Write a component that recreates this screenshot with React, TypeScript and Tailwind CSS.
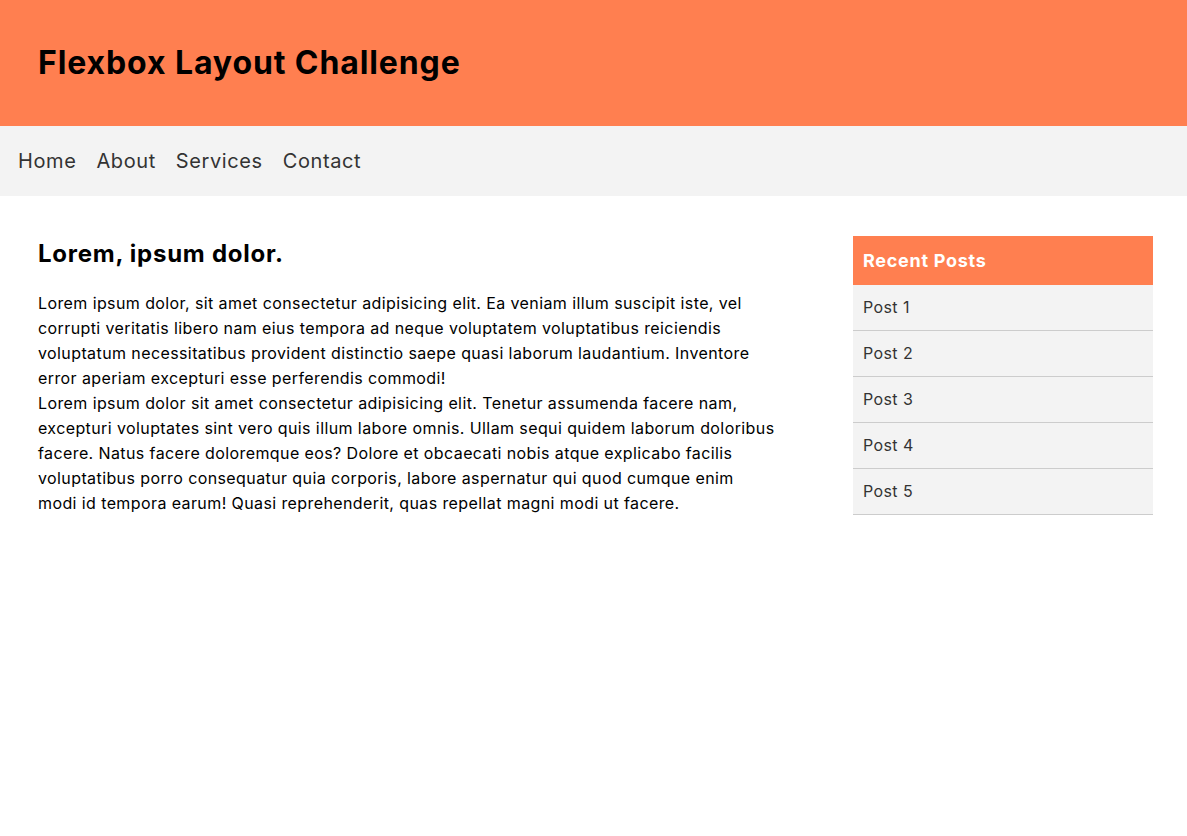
import React from "react";

const posts = ["Post 1", "Post 2", "Post 3", "Post 4", "Post 5"];

export default function App() {
  return (
    <div className="min-h-screen bg-white font-['Inter',sans-serif] tracking-wide text-black">
      <header className="flex h-[126px] items-center bg-[#ff7f50] pl-[38px]">
        <h1 className="text-[32px] font-bold leading-none tracking-[0.028em]">Flexbox Layout Challenge</h1>
      </header>
      <nav className="flex h-[70px] items-center gap-5 bg-[#f3f3f3] pl-[18px] text-[20px] tracking-[0.03em] text-[#333]">
        <a href="#">Home</a>
        <a href="#">About</a>
        <a href="#">Services</a>
        <a href="#">Contact</a>
      </nav>
      <main className="flex items-start gap-[77px] pl-[38px] pr-[34px] pt-10">
        <article className="flex-1">
          <h2 className="text-[24px] font-bold leading-9 tracking-[0.031em]">Lorem, ipsum dolor.</h2>
          <p className="mt-[19px] text-[16px] leading-[25px]">
            Lorem ipsum dolor, sit amet consectetur adipisicing elit. Ea veniam illum suscipit iste, vel corrupti veritatis libero nam eius tempora ad neque voluptatem voluptatibus reiciendis voluptatum necessitatibus provident distinctio saepe quasi laborum laudantium. Inventore error aperiam excepturi esse perferendis commodi!
            <br />
            Lorem ipsum dolor sit amet consectetur adipisicing elit. Tenetur assumenda facere nam, excepturi voluptates sint vero quis illum labore omnis. Ullam sequi quidem laborum doloribus facere. Natus facere doloremque eos? Dolore et obcaecati nobis atque explicabo facilis voluptatibus porro consequatur quia corporis, labore aspernatur qui quod cumque enim modi id tempora earum! Quasi reprehenderit, quas repellat magni modi ut facere.
          </p>
        </article>
        <aside className="w-[300px] shrink-0">
          <h3 className="bg-[#ff7f50] px-[10px] py-[10px] text-[18px] font-bold leading-[29px] tracking-[0.04em] text-white">Recent Posts</h3>
          <ul>
            {posts.map((p) => (
              <li key={p} className="border-b border-[#cccccc] bg-[#f3f3f3] p-[10px] text-[16px] leading-[25px] text-[#333]">
                {p}
              </li>
            ))}
          </ul>
        </aside>
      </main>
    </div>
  );
}
